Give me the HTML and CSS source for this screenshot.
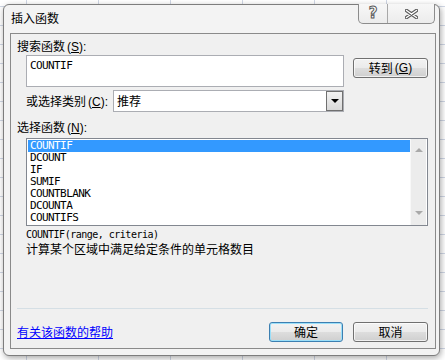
FILE: index.html
```html
<!DOCTYPE html>
<html lang="zh">
<head>
<meta charset="utf-8">
<title>插入函数</title>
<link rel="stylesheet" href="styles.css">
</head>
<body>
<div class="dialog">
  <div class="titlebar">
    <span class="title">插入函数</span>
    <div class="caption-btns">
      <span class="cap-btn help">?</span>
      <span class="cap-btn close">
        <svg width="13" height="10" viewBox="0 0 13 10">
          <path d="M1.5 1.5 L11.5 8.5 M11.5 1.5 L1.5 8.5" stroke="#5a5a5a" stroke-width="3.4" stroke-linecap="round" fill="none"/>
          <path d="M1.5 1.5 L11.5 8.5 M11.5 1.5 L1.5 8.5" stroke="#ffffff" stroke-width="1.4" stroke-linecap="round" fill="none"/>
        </svg>
      </span>
    </div>
  </div>
  <div class="client">
    <div class="label">搜索函数<span class="acc">(<u>S</u>):</span></div>
    <div class="search-row">
      <div class="search-box">COUNTIF</div>
      <div class="btn goto">转到<span class="acc">(<u>G</u>)</span></div>
    </div>
    <div class="cat-row">
      <span class="cat-label">或选择类别<span class="acc">(<u>C</u>):</span></span>
      <div class="select">
        <span class="select-text">推荐</span>
        <span class="drop-btn"><span class="arrow-down"></span></span>
      </div>
    </div>
    <div class="label label-fn">选择函数<span class="acc">(<u>N</u>):</span></div>
    <div class="listbox">
      <div class="items">
        <div class="item selected">COUNTIF</div>
        <div class="item">DCOUNT</div>
        <div class="item">IF</div>
        <div class="item">SUMIF</div>
        <div class="item">COUNTBLANK</div>
        <div class="item">DCOUNTA</div>
        <div class="item">COUNTIFS</div>
      </div>
      <div class="scrollbar">
        <span class="sb-up"></span>
        <span class="sb-down"></span>
      </div>
    </div>
    <div class="syntax">COUNTIF(range, criteria)</div>
    <div class="desc">计算某个区域中满足给定条件的单元格数目</div>
    <div class="separator"></div>
    <div class="bottom-row">
      <a class="help-link" href="#">有关该函数的帮助</a>
      <div class="btn ok">确定</div>
      <div class="btn cancel">取消</div>
    </div>
  </div>
</div>
</body>
</html>
```
FILE: styles.css
```css
html, body {
  margin: 0;
  padding: 0;
}
body {
  width: 445px;
  height: 360px;
  overflow: hidden;
  background-color: #ffffff;
  background-image:
    linear-gradient(to right, #d0d7e5 1px, transparent 1px),
    linear-gradient(to bottom, #d0d7e5 1px, transparent 1px);
  background-size: 72px 100%, 100% 19px;
  background-position: 26px 0, 0 6px;
  font-family: "Noto Sans CJK SC", "Noto Sans", sans-serif;
  font-size: 12px;
  color: #000;
}
.dialog {
  box-sizing: border-box;
  margin: 4px 0 0 3px;
  width: 437px;
  height: 352px;
  border: 1px solid #7d7d7d;
  border-radius: 6px;
  background: #f3f3f3;
  padding: 0 3px 0 6px;
  box-shadow: 1px 2px 6px rgba(0, 0, 0, 0.35);
}
.titlebar {
  height: 28px;
  display: flex;
  justify-content: space-between;
  align-items: flex-start;
}
.title {
  margin: 5px 0 0 1px;
  line-height: 16px;
  font-size: 12px;
}
.caption-btns {
  display: flex;
  margin: -1px 1px 0 0;
  height: 20px;
  box-sizing: border-box;
  border: 1px solid #8c8c8c;
  border-top: none;
  border-radius: 0 0 5px 5px;
  background: linear-gradient(#f7f7f7, #ececec);
  overflow: hidden;
}
.cap-btn {
  display: flex;
  align-items: center;
  justify-content: center;
  height: 100%;
}
.help {
  width: 28px;
  border-right: 1px solid #a8a8a8;
  font-family: "DejaVu Sans", sans-serif;
  font-weight: bold;
  font-size: 15px;
  color: #ffffff;
  -webkit-text-stroke: 1px #5a5a5a;
  line-height: 19px;
}
.close {
  width: 46px;
}
.client {
  box-sizing: border-box;
  width: 426px;
  border: 1px solid #8a8a8a;
  background: #f0f0f0;
  padding: 0 7px 6px 6px;
}
.acc {
  font-family: "Liberation Sans", sans-serif;
  margin-left: 2px;
}
.label {
  margin-top: 4px;
  line-height: 16px;
  height: 16px;
}
.label-fn {
  margin-top: 7px;
}
.search-row {
  display: flex;
  align-items: flex-start;
  margin: 1px 0 0 9px;
}
.search-box {
  box-sizing: border-box;
  width: 318px;
  height: 32px;
  border: 1px solid #abadb3;
  background: #ffffff;
  font-family: "DejaVu Sans Mono", monospace;
  font-size: 11px;
  letter-spacing: -0.6px;
  line-height: 12px;
  padding: 4px 0 0 3px;
}
.btn {
  box-sizing: border-box;
  height: 20px;
  border: 1px solid #707070;
  border-radius: 3px;
  background: linear-gradient(#f2f2f2 0%, #ebebeb 48%, #dddddd 52%, #cfcfcf 100%);
  box-shadow: inset 0 0 0 1px rgba(255, 255, 255, 0.7);
  display: flex;
  align-items: center;
  justify-content: center;
  line-height: 16px;
}
.goto {
  width: 75px;
  margin: 3px 0 0 9px;
}
.cat-row {
  display: flex;
  align-items: center;
  margin: 3px 0 0 9px;
  height: 22px;
}
.cat-label {
  width: 87px;
  line-height: 16px;
}
.select {
  box-sizing: border-box;
  width: 231px;
  height: 22px;
  border: 1px solid #abadb3;
  background: #ffffff;
  display: flex;
  align-items: center;
}
.select-text {
  flex: 1;
  padding-left: 3px;
  line-height: 16px;
}
.drop-btn {
  box-sizing: border-box;
  width: 17px;
  height: 20px;
  border: 1px solid #707070;
  background: linear-gradient(#f2f2f2, #d9d9d9);
  display: flex;
  align-items: center;
  justify-content: center;
}
.arrow-down {
  width: 0;
  height: 0;
  border-left: 4px solid transparent;
  border-right: 4px solid transparent;
  border-top: 4px solid #000;
}
.listbox {
  box-sizing: border-box;
  margin: 3px 0 0 9px;
  width: 402px;
  height: 88px;
  border: 1px solid #828790;
  background: #ffffff;
  padding: 1px 0 1px 1px;
  display: flex;
}
.items {
  width: 382px;
}
.item {
  height: 12px;
  line-height: 12px;
  padding-left: 2px;
  font-family: "DejaVu Sans Mono", monospace;
  font-size: 11px;
  letter-spacing: -0.6px;
  color: #000;
}
.item.selected {
  background: #3399ff;
  color: #ffffff;
}
.scrollbar {
  width: 16px;
  margin-top: -1px;
  margin-bottom: -1px;
  background: #ececec;
  border-left: 1px solid #f8f8f8;
  display: flex;
  flex-direction: column;
  justify-content: space-between;
  align-items: center;
  padding: 9px 0 10px;
  box-sizing: border-box;
}
.sb-up {
  width: 0;
  height: 0;
  border-left: 4px solid transparent;
  border-right: 4px solid transparent;
  border-bottom: 4px solid #a9a9a9;
}
.sb-down {
  width: 0;
  height: 0;
  border-left: 4px solid transparent;
  border-right: 4px solid transparent;
  border-top: 4px solid #a9a9a9;
}
.syntax {
  margin: 3px 0 0 9px;
  line-height: 12px;
  height: 12px;
  font-family: "DejaVu Sans Mono", monospace;
  font-size: 10px;
  letter-spacing: -0.5px;
}
.desc {
  margin-left: 9px;
  line-height: 16px;
  height: 16px;
}
.separator {
  margin-top: 51px;
  height: 1px;
  background: #d5dfe5;
}
.bottom-row {
  margin-top: 13px;
  display: flex;
  align-items: center;
  height: 20px;
}
.help-link {
  color: #0000ff;
  text-decoration: underline;
  line-height: 16px;
}
.ok {
  margin-left: auto;
  width: 74px;
  border-color: #3c7fb1;
  box-shadow: inset 0 0 0 1px #9bdff9;
}
.cancel {
  margin-left: 10px;
  width: 75px;
}
```
